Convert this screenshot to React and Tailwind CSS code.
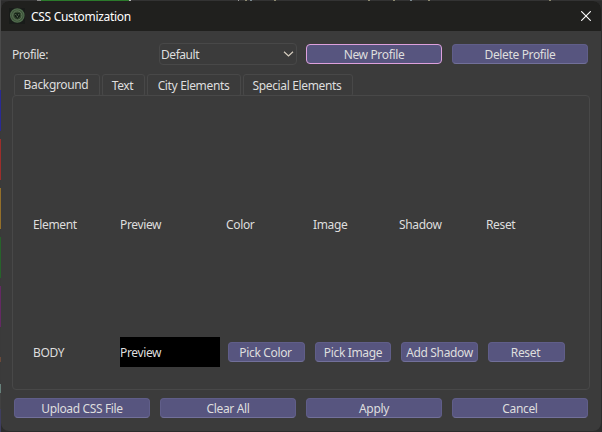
import React from 'react';

const button =
  'flex h-5 items-center justify-center rounded-[4px] border pt-[2px] text-[#dedede] whitespace-nowrap bg-[#57557f]';

function Button({ children, className = 'w-[136px]', focused = false }) {
  const border = focused ? 'border-[#dda0dd]' : 'border-[#605e89] border-b-[#72709a]';
  return <button className={`${button} ${border} ${className}`}>{children}</button>;
}

function Logo() {
  return (
    <svg className="ml-[8px] h-4 w-4" viewBox="0 0 16 16">
      <rect width="16" height="16" fill="#181b19" />
      <circle cx="8.3" cy="7.5" r="6.7" fill="#3b5138" stroke="#4f6a4c" strokeWidth="1.2" />
      <circle cx="8.3" cy="7.5" r="4.6" fill="#33472f" stroke="#6b8464" strokeWidth=".8" />
      <path d="M5.5 5.2h5.6L10.8 8.6 8.3 11 5.8 8.6z" fill="#111b14" />
      <path d="M6.3 6.4l1.4.8M10.3 6.4l-1.4.8M8.3 8v1.4" stroke="#789070" strokeWidth=".8" />
    </svg>
  );
}

function Tab({ children, className }) {
  return (
    <div className={`flex h-[22px] items-center justify-center rounded-t-[3px] rounded-b-[2px] border border-[#484848] whitespace-nowrap ${className}`}>
      {children}
    </div>
  );
}

const edge = [
  'h-[90px] bg-[#4a4a4a]',
  'h-[41px] bg-[#292a94]',
  'h-2 bg-[#3a3a3a]',
  'h-[41px] bg-[#9c2e2b]',
  'h-2 bg-[#3a3a3a]',
  'h-[41px] bg-[#94702a]',
  'h-2 bg-[#3a3a3a]',
  'h-[41px] bg-[#27632b]',
  'h-2 bg-[#3a3a3a]',
  'h-[41px] bg-[#642963]',
  'h-[30px] bg-[#3a3a3a]',
  'h-[5px] bg-[#6b4a3a]',
  'h-[22px] bg-[#3a3a3a]',
  'h-[9px] bg-[#66807a]',
  'h-4 bg-[#414141]',
  'h-[23px] bg-[#3f3e60]',
];

export default function App() {
  return (
    <div className="flex h-[432px] w-[602px] overflow-hidden bg-[#2c2c2c] font-['Noto_Sans','Open_Sans',sans-serif] text-[12px] leading-4 tracking-[-0.35px] text-[#dedede]">
      <div className="flex w-px shrink-0 flex-col">
        {edge.map((e, i) => <div key={i} className={`shrink-0 ${e}`} />)}
      </div>
      <div className="flex w-[601px] flex-col">
        <div className="flex h-px shrink-0 bg-[#333333]">
          <div className="ml-[36px] w-[4px] bg-[#888888]" />
          <div className="w-[88px] bg-[#2b7a2b]" />
          <div className="w-[2px] bg-[#bbbbbb]" />
          <div className="ml-[107px] w-px bg-[#999999]" />
          <div className="ml-[6px] w-[2px] bg-[#8d8a70]" />
          <div className="ml-[3px] w-[2px] bg-[#7b8a90]" />
          <div className="ml-[22px] w-[2px] bg-[#8d8a70]" />
          <div className="ml-[92px] w-[2px] bg-[#8d8a70]" />
          <div className="ml-[23px] w-[2px] bg-[#8d8a70]" />
          <div className="ml-[15px] w-[2px] bg-[#7b8a90]" />
          <div className="ml-[16px] w-[2px] bg-[#8d8a70]" />
          <div className="ml-[119px] w-[2px] bg-[#8d8a70]" />
        </div>
        <div className="flex h-[430px] w-[600px] flex-col overflow-hidden rounded-[8px] bg-[#3b3b3b]">
          <header className="flex h-[30px] shrink-0 items-center bg-[#20201e]">
            <Logo />
            <h1 className="ml-[6px] flex-1 pt-px tracking-[-0.3px] text-white">CSS Customization</h1>
            <svg className="mr-[10px] h-[10px] w-[10px]" viewBox="0 0 10 10" fill="none" stroke="#fff" strokeWidth="1.1">
              <path d="M.2.2l9.6 9.6M9.8.2L.2 9.8" />
            </svg>
          </header>

          <div className="mt-3 flex h-[22px] shrink-0 items-center pl-[11px]">
            <span className="w-[147px] pt-[2px] tracking-[-0.45px]">Profile:</span>
            <div className="flex h-[22px] w-[138px] items-center justify-between rounded-[4px] border border-[#484848] pl-px pr-[2px]">
              <span className="pt-[2px] tracking-[-0.45px]">Default</span>
              <svg className="h-[6px] w-[11px]" viewBox="0 0 11 6" fill="none" stroke="#d6cdbf" strokeWidth="1.2">
                <path d="M1 .7l4.5 4.2L10 .7" />
              </svg>
            </div>
            <Button className="ml-[9px] w-[136px]" focused>New Profile</Button>
            <Button className="ml-[10px] w-[136px]">Delete Profile</Button>
          </div>

          <div className="mt-[9px] flex h-[22px] shrink-0 gap-[2px] pl-[13px]">
            <Tab className="w-[86px] pr-[2px]">Background</Tab>
            <Tab className="w-[43px] pt-[2px] pr-[2px]">Text</Tab>
            <Tab className="w-[94px] pt-[2px] pr-px">City Elements</Tab>
            <Tab className="w-[110px] pt-[2px] pr-[2px]">Special Elements</Tab>
          </div>

          <main className="-mt-px ml-[11px] flex h-[295px] w-[578px] shrink-0 flex-col rounded-[4px] border border-[#484848] pl-5">
            <div className="mt-[121px] grid h-4 grid-cols-[87px_106px_87px_86px_87px_80px]">
              <span>Element</span>
              <span>Preview</span>
              <span>Color</span>
              <span>Image</span>
              <span>Shadow</span>
              <span>Reset</span>
            </div>
            <div className="mt-[104px] flex h-[30px] items-center">
              <span className="w-[87px] pt-[2px]">BODY</span>
              <div className="mr-2 flex h-[30px] w-[100px] items-center bg-black pt-[2px]">Preview</div>
              <Button className="w-[77px] pr-[2px]">Pick Color</Button>
              <Button className="ml-[10px] w-[76px]">Pick Image</Button>
              <Button className="ml-[10px] w-[77px]">Add Shadow</Button>
              <Button className="ml-[10px] w-[77px] pr-[2px]">Reset</Button>
            </div>
          </main>

          <footer className="mt-2 flex shrink-0 gap-[10px] pl-[13px]">
            <Button>Upload CSS File</Button>
            <Button>Clear All</Button>
            <Button>Apply</Button>
            <Button>Cancel</Button>
          </footer>
        </div>
      </div>
    </div>
  );
}
